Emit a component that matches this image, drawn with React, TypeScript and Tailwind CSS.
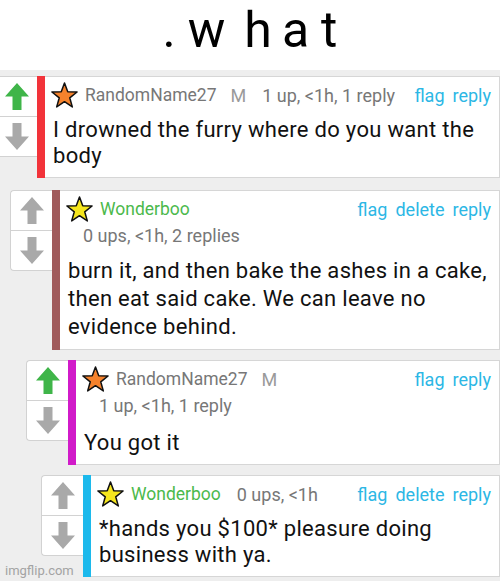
import React from "react";

type CommentProps = {
    indent: string;
    bar: string;
    up: boolean;
    name: string;
    nameColor: string;
    star: string;
    mod?: boolean;
    meta: string;
    metaBelow?: boolean;
    del?: boolean;
    lines: string[];
    leading: string;
    gap: string;
};

function Arrow({ dir, color }: { dir: "up" | "down"; color: string }) {
    return (
        <svg width="24" height="27" viewBox="0 0 24 27" className={dir === "down" ? "rotate-180" : ""}>
            <polygon points="12,0 24,13.5 16.5,13.5 16.5,27 7.5,27 7.5,13.5 0,13.5" fill={color} />
        </svg>
    );
}

function Star({ fill }: { fill: string }) {
    return (
        <svg width="27" height="27" viewBox="0.4 0.4 23.2 23.2" className="shrink-0">
            <polygon
                points="12,1.2 14.8,8.7 22.8,9 16.5,14 18.7,21.8 12,17.3 5.3,21.8 7.5,14 1.2,9 9.2,8.7"
                fill={fill}
                stroke="#111"
                strokeWidth="1.3"
                strokeLinejoin="round"
            />
        </svg>
    );
}

function Comment(c: CommentProps) {
    const meta = <span className="text-[#777777]">{c.meta}</span>;
    return (
        <div className={`flex ${c.indent}`}>
            <div className="w-[42px] h-[81px] shrink-0 flex flex-col bg-white border border-r-0 border-[#d2d2d2] rounded-l-[4px]">
                <div className="h-[40px] flex items-center justify-center border-b border-[#d2d2d2]">
                    <Arrow dir="up" color={c.up ? "#3fb549" : "#a9a9a9"} />
                </div>
                <div className="flex-1 flex items-center justify-center">
                    <Arrow dir="down" color="#a9a9a9" />
                </div>
            </div>
            <div className={`w-[8px] shrink-0 ${c.bar}`} />
            <div className="flex-1 bg-white border border-l-0 border-[#d6d6d6] pt-[5px] pb-[8px]">
                <div className="flex items-center h-[26px] pl-[6px] pr-[8px] text-[18px]">
                    <Star fill={c.star} />
                    <span className={`ml-[7px] text-[17.5px] ${c.nameColor}`}>{c.name}</span>
                    {c.mod && <span className="ml-[14px] text-[#9a9a9a]">M</span>}
                    {!c.metaBelow && <span className="ml-[16px]">{meta}</span>}
                    <div className="ml-auto flex gap-[8px] text-[#2cb7e5]">
                        <span>flag</span>
                        {c.del && <span>delete</span>}
                        <span>reply</span>
                    </div>
                </div>
                {c.metaBelow && (
                    <div className="flex items-center h-[26px] pl-[23px] text-[18px]">{meta}</div>
                )}
                <div className={`${c.gap} pl-[8px] pr-[8px] text-[22px] tracking-[0.3px] text-[#111111] ${c.leading}`}>
                    {c.lines.map((l) => (
                        <div key={l} className="whitespace-nowrap">{l}</div>
                    ))}
                </div>
            </div>
        </div>
    );
}

export default function App() {
    return (
        <div className="relative w-[500px] h-[581px] overflow-hidden bg-[#eeeeee] font-['Roboto',sans-serif]">
            <div className="h-[70px] bg-white flex justify-center pt-[5px] text-[50px] leading-[50px] text-black">
                <span>.</span>
                <span className="ml-[12px]">w</span>
                <span className="ml-[19px]">h</span>
                <span className="ml-[10px]">a</span>
                <span className="ml-[12px]">t</span>
            </div>

            <div className="flex flex-col pt-[6px]">
                <div className="mb-[12px]">
                    <Comment
                        indent="-ml-[5px]"
                        bar="bg-[#f2333a]"
                        up
                        name="RandomName27"
                        nameColor="text-[#777777]"
                        star="#f5822c"
                        mod
                        meta="1 up, <1h, 1 reply"
                        lines={["I drowned the furry where do you want the", "body"]}
                        leading="leading-[26px]"
                        gap="mt-[9px]"
                    />
                </div>
                <div className="mb-[10px]">
                    <Comment
                        indent="ml-[10px]"
                        bar="bg-[#a05a5b]"
                        up={false}
                        name="Wonderboo"
                        nameColor="text-[#4cb94c]"
                        star="#f6e61e"
                        meta="0 ups, <1h, 2 replies"
                        metaBelow
                        del
                        lines={[
                            "burn it, and then bake the ashes in a cake,",
                            "then eat said cake. We can leave no",
                            "evidence behind.",
                        ]}
                        leading="leading-[28px]"
                        gap="mt-[9px]"
                    />
                </div>
                <div className="mb-[10px]">
                    <Comment
                        indent="ml-[26px]"
                        bar="bg-[#d11bc9]"
                        up
                        name="RandomName27"
                        nameColor="text-[#777777]"
                        star="#f5822c"
                        mod
                        meta="1 up, <1h, 1 reply"
                        metaBelow
                        lines={["You got it"]}
                        leading="leading-[26px]"
                        gap="mt-[12px]"
                    />
                </div>
                <Comment
                    indent="ml-[41px]"
                    bar="bg-[#1cb9ec]"
                    up={false}
                    name="Wonderboo"
                    nameColor="text-[#4cb94c]"
                    star="#f6e61e"
                    meta="0 ups, <1h"
                    del
                    lines={["*hands you $100* pleasure doing", "business with ya."]}
                    leading="leading-[26px]"
                    gap="mt-[9px]"
                />
            </div>

            <div className="absolute left-[5px] bottom-[3px] text-[13px] leading-[14px] text-[#a3a3a3]">imgflip.com</div>
        </div>
    );
}
